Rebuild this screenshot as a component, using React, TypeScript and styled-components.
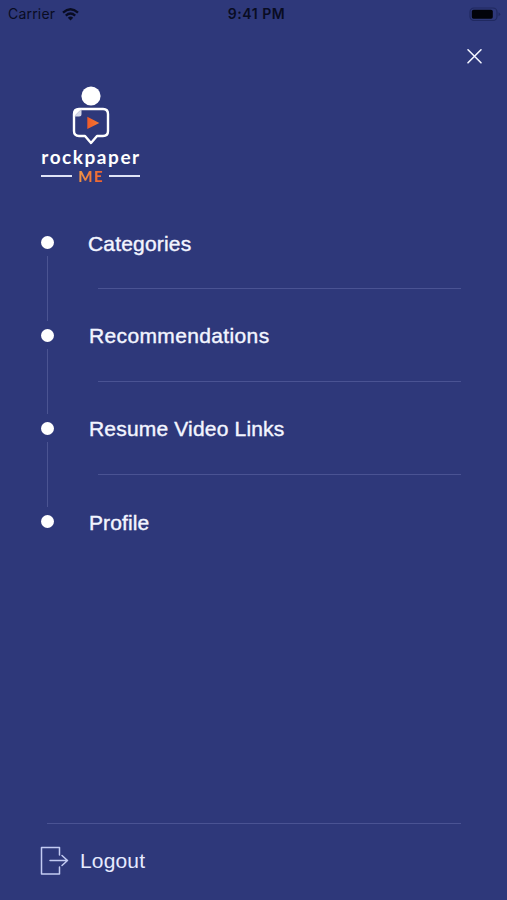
import React from 'react';
import styled, { createGlobalStyle } from 'styled-components';

const GlobalStyle = createGlobalStyle`
  html, body { margin: 0; background: #2e387a; }
  * { box-sizing: border-box; }
`;

const Screen = styled.main`
  width: 507px;
  height: 900px;
  display: flex;
  flex-direction: column;
  overflow: hidden;
  background: #2e387a;
  color: #f3f5ff;
  font-family: 'Liberation Sans', Arial, sans-serif;
`;

const StatusBar = styled.header`
  height: 28px;
  flex: none;
  display: grid;
  grid-template-columns: 1fr auto 1fr;
  align-items: center;
  padding: 0 6px 0 8px;
  color: #090c22;
  font-family: Inter, 'Liberation Sans', sans-serif;
  font-size: 14px;
  line-height: 28px;
`;

const Carrier = styled.div`
  display: flex;
  align-items: center;
  gap: 7px;
  letter-spacing: 0.2px;
`;

const Clock = styled.time`
  padding-left: 4px;
  font-weight: 600;
  letter-spacing: 0.55px;
`;

const Battery = styled.svg`
  justify-self: end;
`;

const TopBar = styled.div`
  height: 57px;
  flex: none;
  display: flex;
  justify-content: flex-end;
  padding: 20px 24px 0 0;
`;

const CloseButton = styled.button`
  width: 17px;
  height: 17px;
  padding: 0;
  border: 0;
  background: none;
  color: inherit;

  svg { display: block; }
`;

const Brand = styled.div`
  width: 101px;
  height: 115px;
  flex: none;
  margin-left: 40px;
  display: flex;
  flex-direction: column;
  align-items: center;
  font-family: Lato, sans-serif;

  svg { display: block; flex: none; }
`;

const Wordmark = styled.div`
  height: 21px;
  margin: 1px -1px 0 0;
  font-size: 19px;
  line-height: 19px;
  font-weight: 700;
  letter-spacing: 1.55px;
  white-space: nowrap;
  color: #fff;
`;

const BrandFooter = styled.div`
  width: 99px;
  height: 16px;
  display: grid;
  grid-template-columns: 1fr auto 1fr;
  align-items: center;
  column-gap: 6px;
`;

const BrandRule = styled.span`
  height: 1.5px;
  background: #dfe3f6;
`;

const BrandAccent = styled.span`
  font-size: 15px;
  line-height: 16px;
  font-weight: 900;
  letter-spacing: 1.6px;
  margin-right: -1.6px;
  color: transparent;
  background: linear-gradient(100deg, #f19a48, #ed5b2d);
  background-clip: text;
`;

const Menu = styled.nav`
  flex: 1;
  padding: 36px 46px 0 41px;
`;

const MenuItem = styled.a`
  height: 93px;
  display: grid;
  grid-template-columns: 13px 1fr;
  column-gap: 35px;
  color: inherit;
  text-decoration: none;
`;

const Rail = styled.span`
  display: flex;
  flex-direction: column;
  align-items: center;
  gap: 7px;
`;

const Dot = styled.span`
  width: 13px;
  height: 13px;
  flex: none;
  border-radius: 50%;
  background: #fff;
`;

const Connector = styled.span`
  width: 1px;
  height: 65px;
  background: #4b5492;
`;

const ItemBody = styled.span<{ $top: number }>`
  display: flex;
  flex-direction: column;
  padding-top: ${(p) => p.$top}px;
`;

const Label = styled.span<{ $spacing: number; $indent?: number }>`
  height: 24px;
  margin: -5px 0 0 ${(p) => p.$indent ?? 0}px;
  font-size: 21px;
  line-height: 24px;
  letter-spacing: ${(p) => p.$spacing}px;
  white-space: nowrap;
  -webkit-text-stroke: 0.4px currentColor;
`;

const Divider = styled.span<{ $wide?: boolean; $gap?: number }>`
  display: block;
  flex: none;
  height: 1px;
  margin: ${(p) => (p.$wide ? '0 0 0 6px' : `${p.$gap ?? 32}px 0 0 9px`)};
  background: #4a5393;
`;

const Footer = styled.footer`
  height: 77px;
  flex: none;
  padding: 0 46px 0 41px;
`;

const LogoutButton = styled.button`
  display: flex;
  align-items: center;
  gap: 11px;
  margin: 22px 0 0 -1px;
  padding: 0;
  border: 0;
  background: none;
  color: #e6eaff;
  font: 21px/30px 'Liberation Sans', Arial, sans-serif;
  letter-spacing: 0.15px;

  svg { display: block; }
`;

const items = [
  { label: 'Categories', spacing: 0.18, indent: -1, top: 1, gap: 32 },
  { label: 'Recommendations', spacing: 0.36, top: 0, gap: 33 },
  { label: 'Resume Video Links', spacing: 0.18, top: 0, gap: 33 },
  { label: 'Profile', spacing: 0.1, top: 1, gap: 32 },
];

function WifiIcon() {
  return (
    <svg width="17" height="13" viewBox="0 0 17 13" fill="none" stroke="currentColor" strokeWidth="2.3">
      <path d="M1 4.6Q8.5-2 16 4.6M3.8 7.6Q8.5 3.5 13.2 7.6" />
      <path d="M5.8 9.7Q8.5 7.3 11.2 9.7L8.5 12.5Z" fill="currentColor" stroke="none" />
    </svg>
  );
}

function BrandMark() {
  return (
    <svg width="38" height="61" viewBox="0 0 38 61">
      <defs>
        <linearGradient id="play" x1="0" x2="1">
          <stop stopColor="#f05a28" />
          <stop offset="1" stopColor="#f47a35" />
        </linearGradient>
      </defs>
      <circle cx="19" cy="11" r="9.6" fill="#fff" />
      <path
        d="M7 24H31Q36 24 36 29V46Q36 51 31 51H25L19 58L13 51H7Q2 51 2 46V29Q2 24 7 24Z"
        fill="none" stroke="#fff" strokeWidth="2.4" strokeLinejoin="round"
      />
      <path d="M2 31.5L9.5 24V29Q9.5 31.5 7 31.5Z" fill="#d5d9e8" />
      <path d="M2 31.5V28Q2 24 6 24H9.5Z" fill="#fff" />
      <path d="M15.3 31.8L27.3 38L15.3 44Z" fill="url(#play)" />
    </svg>
  );
}

export default function App() {
  return (
    <>
      <GlobalStyle />
      <Screen>
        <StatusBar>
          <Carrier>Carrier <WifiIcon /></Carrier>
          <Clock>9:41 PM</Clock>
          <Battery width="32" height="15" viewBox="0 0 32 15">
            <rect x="1" y="1" width="27" height="12.5" rx="4" fill="none" stroke="#202960" strokeWidth="1.2" />
            <rect x="2.8" y="2.8" width="21" height="9" rx="1.8" fill="#02030a" />
            <path d="M29.5 5.2Q33 7.2 29.5 9.3Z" fill="#202960" />
          </Battery>
        </StatusBar>
        <TopBar>
          <CloseButton aria-label="Close">
            <svg width="17" height="17" viewBox="0 0 17 17" fill="none" stroke="currentColor" strokeWidth="1.6" strokeLinecap="round">
              <path d="M2 1.8L15 14.8M15 1.8L2 14.8" />
            </svg>
          </CloseButton>
        </TopBar>
        <Brand>
          <BrandMark />
          <Wordmark>rockpaper</Wordmark>
          <BrandFooter><BrandRule /><BrandAccent>ME</BrandAccent><BrandRule /></BrandFooter>
        </Brand>
        <Menu>
          {items.map((item, index) => (
            <MenuItem key={item.label}>
              <Rail><Dot />{index < items.length - 1 && <Connector />}</Rail>
              <ItemBody $top={item.top}>
                <Label $spacing={item.spacing} $indent={item.indent}>{item.label}</Label>
                {index < items.length - 1 && <Divider $gap={item.gap} />}
              </ItemBody>
            </MenuItem>
          ))}
        </Menu>
        <Footer>
          <Divider $wide />
          <LogoutButton>
            <svg width="29" height="30" viewBox="0 0 29 30" fill="none" stroke="#c3cbf2" strokeWidth="1.5" strokeLinecap="round" strokeLinejoin="round">
              <path d="M19.5 9V1.5H1.5V28H19.5V21M10 14.5H27.5M22 9.5L27.5 14.5L22 19.5" />
            </svg>
            Logout
          </LogoutButton>
        </Footer>
      </Screen>
    </>
  );
}
